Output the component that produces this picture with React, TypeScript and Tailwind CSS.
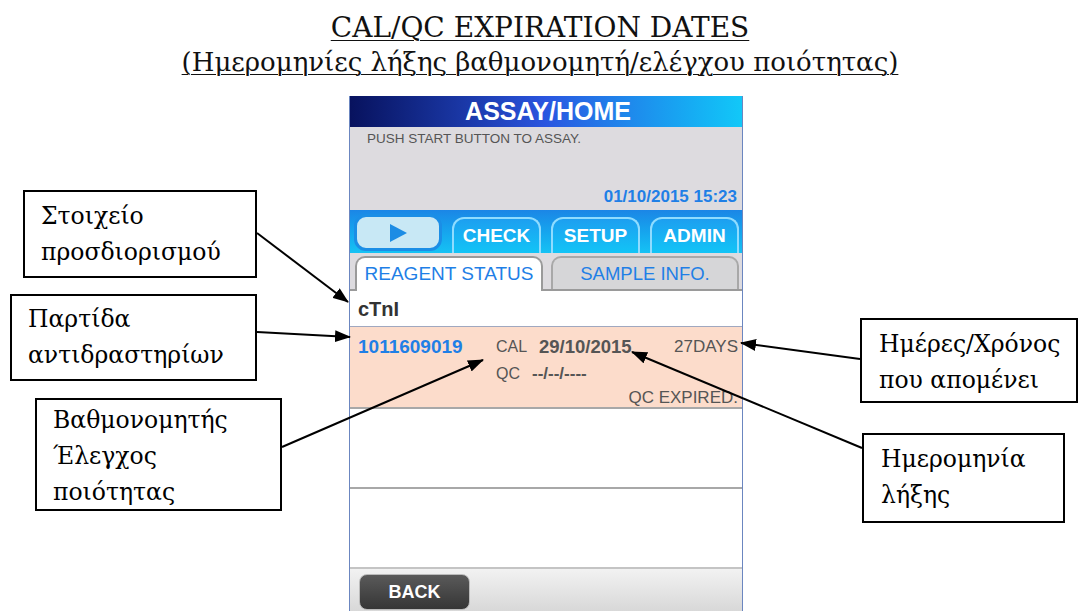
import React from "react";

const serif = { fontFamily: '"DejaVu Serif", "Liberation Serif", serif' };
const sans = { fontFamily: '"Liberation Sans", Arial, sans-serif' };

interface CalloutProps {
  lines: string[];
  className: string;
}

const Callout = ({ lines, className }: CalloutProps) => (
  <div
    className={`absolute border-2 border-black bg-white text-[23.5px] leading-[36px] text-black ${className}`}
    style={serif}
  >
    {lines.map((line, i) => (
      <div key={i}>{line}</div>
    ))}
  </div>
);

const TopTab = ({ label }: { label: string }) => (
  <div className="flex h-[36px] w-[89px] items-center justify-center rounded-t-[12px] border-2 border-b-0 border-[#8fdcff] bg-gradient-to-b from-[#1d9ff0] to-[#12c4f6] text-[19px] font-bold text-white">
    {label}
  </div>
);

const Device = () => (
  <div
    className="ml-[349px] flex w-[394px] flex-col border-x border-[#6b86c0] bg-white"
    style={sans}
  >
    {/* header */}
    <div className="flex h-[31px] items-center justify-center bg-gradient-to-r from-[#08125e] via-[#2a55e0] to-[#12c8f8] text-[25px] font-bold text-white">
      <span className="ml-[4px]">ASSAY/HOME</span>
    </div>
    {/* message */}
    <div className="flex h-[83px] flex-col justify-between bg-[#dddbdf] pb-[1px] pl-[17px] pr-[5px] pt-[2px]">
      <div className="text-[13.5px] text-[#555]">PUSH START BUTTON TO ASSAY.</div>
      <div className="self-end text-[17px] font-bold text-[#1f7fe6]">01/10/2015 15:23</div>
    </div>
    {/* buttons */}
    <div className="flex h-[43px] items-end gap-[10px] bg-gradient-to-b from-[#1b86e6] to-[#16c2f4] pl-[4px]">
      <div className="mb-[2px] flex h-[37px] w-[88px] items-center justify-center rounded-[12px] border-[3px] border-[#1b8ee6] bg-[#c8e8f5]">
        <svg width="22" height="20" viewBox="0 0 22 20">
          <path d="M3 1 L20 10 L3 19 Z" fill="#1c8ce4" />
        </svg>
      </div>
      <TopTab label="CHECK" />
      <TopTab label="SETUP" />
      <TopTab label="ADMIN" />
    </div>
    {/* tabs */}
    <div className="flex h-[38px] items-end gap-[8px] border-b-2 border-[#9a9a9a] bg-[#dddbdf] pl-[5px]">
      <div className="-mb-[2px] flex h-[35px] w-[188px] items-center justify-center rounded-t-[10px] border-2 border-b-0 border-[#9a9a9a] bg-white text-[19px] text-[#1f7fe6]">
        REAGENT STATUS
      </div>
      <div className="flex h-[33px] w-[188px] items-center justify-center rounded-t-[10px] border-2 border-b-0 border-[#a8a8a8] bg-[#d6d6d8] text-[18.5px] text-[#1f7fe6]">
        SAMPLE INFO.
      </div>
    </div>
    {/* assay name */}
    <div className="flex h-[36px] items-center border-b border-[#a0a8c0] px-[8px] text-[20px] font-bold text-[#333]">
      cTnI
    </div>
    {/* reagent row */}
    <div className="flex h-[82px] flex-col border-b-2 border-[#a8a8a8] bg-[#fcdccb] pl-[8px] pr-[4px] pt-[9px] leading-[22px] text-[#555]">
      <div className="flex items-center">
        <span className="w-[138px] text-[19px] font-bold text-[#1f7fe6]">1011609019</span>
        <span className="w-[43px] text-[16px]">CAL</span>
        <span className="text-[18.5px] font-bold">29/10/2015</span>
        <span className="ml-auto text-[17px]">27DAYS</span>
      </div>
      <div className="mt-[5px] flex items-center">
        <span className="ml-[138px] w-[36px] text-[16px]">QC</span>
        <span className="text-[17px] font-bold">--/--/----</span>
      </div>
      <div className="mt-[2px] self-end text-[17px]">QC EXPIRED.</div>
    </div>
    <div className="h-[80px] border-b-2 border-[#a8a8a8]" />
    <div className="h-[78px]" />
    {/* bottom bar */}
    <div className="flex h-[44px] items-end border-t-2 border-[#c4c4c4] bg-gradient-to-b from-[#f2f2f2] to-[#d8d8d8] pl-[9px]">
      <div className="mb-[1px] flex h-[36px] w-[111px] items-center justify-center rounded-[8px] border border-[#bbb] bg-gradient-to-b from-[#5a5a5a] to-[#363636] text-[18px] font-bold text-white">
        BACK
      </div>
    </div>
  </div>
);

const Arrows = () => (
  <svg className="pointer-events-none absolute left-0 top-0" width="1080" height="614">
    <defs>
      <marker id="ah" markerWidth="16" markerHeight="12" refX="15" refY="6" orient="auto" markerUnits="userSpaceOnUse">
        <path d="M0 0 L16 6 L0 12 Z" fill="#000" />
      </marker>
    </defs>
    <g stroke="#000" strokeWidth="2" fill="none">
      <line x1="257" y1="233" x2="348" y2="302" markerEnd="url(#ah)" />
      <line x1="257" y1="332" x2="350" y2="337" markerEnd="url(#ah)" />
      <line x1="282" y1="447" x2="483" y2="360" markerEnd="url(#ah)" />
      <line x1="860" y1="359" x2="741" y2="343" markerEnd="url(#ah)" />
      <line x1="862" y1="448" x2="632" y2="352" markerEnd="url(#ah)" />
    </g>
  </svg>
);

export default function App() {
  return (
    <div className="relative h-[614px] w-[1080px] overflow-hidden bg-white">
      <div className="pt-[10px] text-center leading-[35px] text-[#111]" style={serif}>
        <div className="text-[28px] underline decoration-1 underline-offset-[3px]">CAL/QC EXPIRATION DATES</div>
        <div className="text-[26px] underline decoration-1 underline-offset-[3px]">
          (Ημερομηνίες λήξης βαθμονομητή/ελέγχου ποιότητας)
        </div>
      </div>
      <div className="mt-[16px]">
        <Device />
      </div>
      <Callout lines={["Στοιχείο", "προσδιορισμού"]} className="left-[23px] top-[190px] h-[88px] w-[234px] pl-[16px] pt-[6px]" />
      <Callout lines={["Παρτίδα", "αντιδραστηρίων"]} className="left-[10px] top-[294px] h-[87px] w-[247px] pl-[16px] pt-[5px]" />
      <Callout lines={["Βαθμονομητής", "Έλεγχος", "ποιότητας"]} className="left-[35px] top-[398px] h-[113px] w-[247px] pl-[16px] pt-[2px] leading-[35px]" />
      <Callout lines={["Ημέρες/Χρόνος", "που απομένει"]} className="left-[860px] top-[318px] h-[85px] w-[218px] pl-[17px] pt-[6px]" />
      <Callout lines={["Ημερομηνία", "λήξης"]} className="left-[862px] top-[433px] h-[90px] w-[203px] pl-[17px] pt-[6px]" />
      <Arrows />
    </div>
  );
}
